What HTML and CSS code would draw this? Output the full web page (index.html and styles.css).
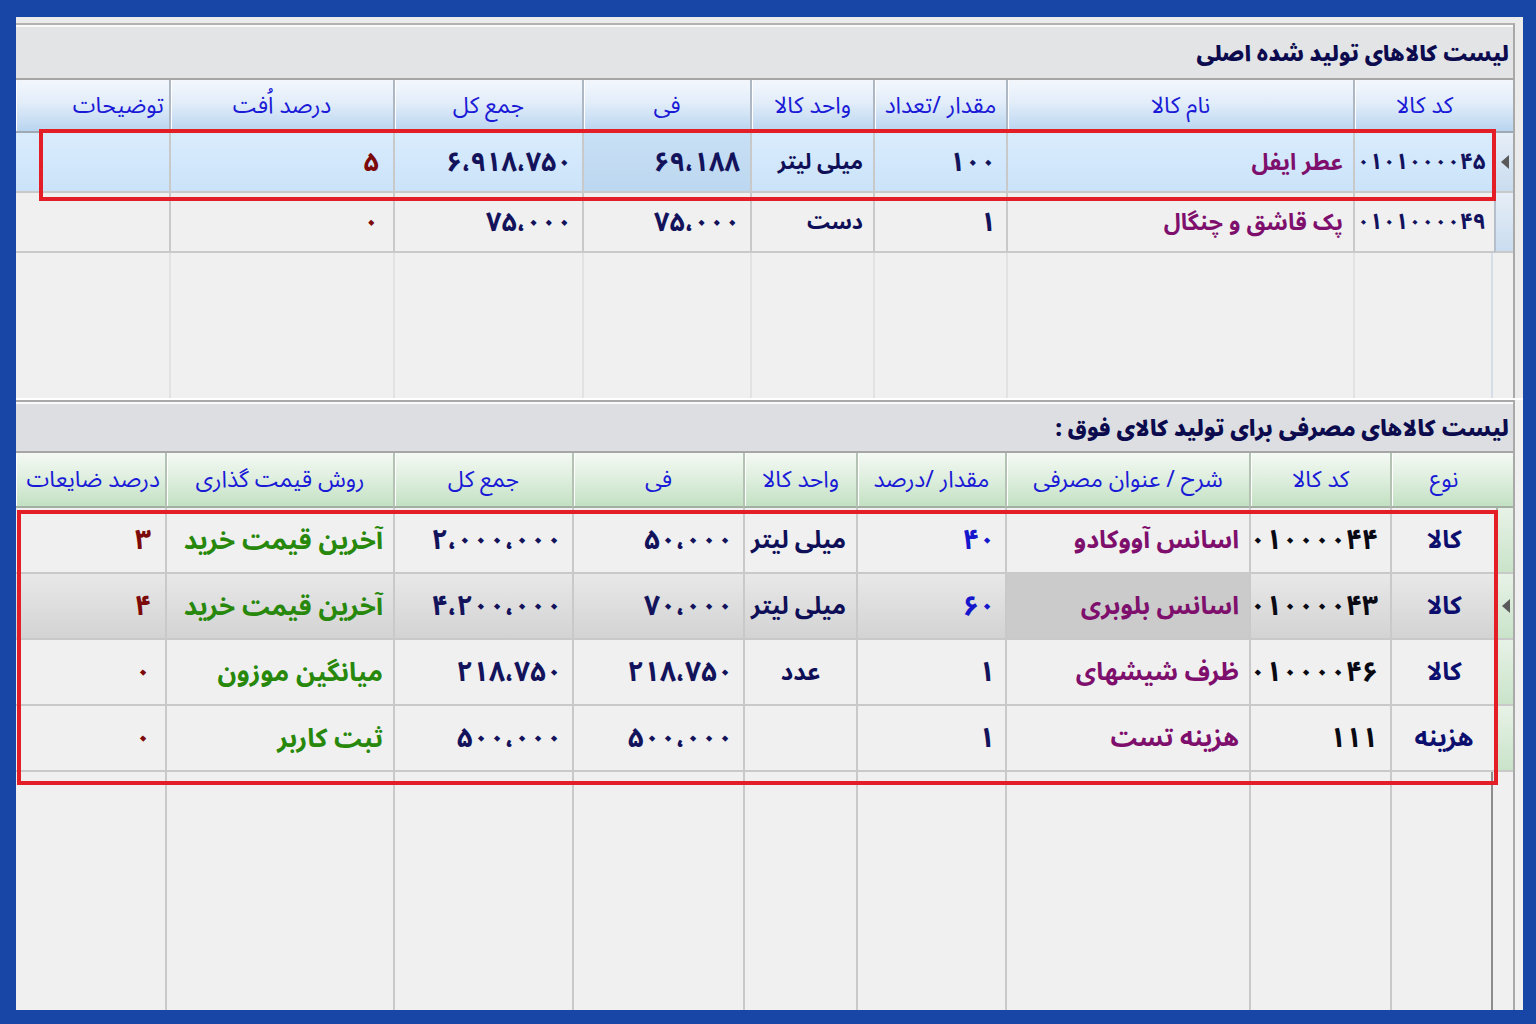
FILE: index.html
```html
<!DOCTYPE html>
<html lang="fa" dir="rtl">
<head>
<meta charset="utf-8">
<title>لیست کالاها</title>
<link rel="stylesheet" href="styles.css">
</head>
<body>
<div class="frame">
  <div class="screen">
    <section class="panel panel-top">
      <div class="box">
        <div class="caption">لیست کالاهای تولید شده اصلی</div>
        <div class="grid grid-top">
          <div class="row head">
            <div class="c ind"></div>
            <div class="c">کد کالا</div>
            <div class="c">نام کالا</div>
            <div class="c">مقدار /تعداد</div>
            <div class="c">واحد کالا</div>
            <div class="c">فی</div>
            <div class="c">جمع کل</div>
            <div class="c">درصد اُفت</div>
            <div class="c right">توضیحات</div>
          </div>
          <div class="row data sel">
            <div class="c ind"><svg width="8" height="14" viewBox="0 0 8 14"><polygon points="8,0 8,14 0,7" fill="#5a5a5a"/></svg></div>
            <div class="c code">۰۱۰۱۰۰۰۰۴۵</div>
            <div class="c name">عطر ایفل</div>
            <div class="c num">۱۰۰</div>
            <div class="c unit">میلی لیتر</div>
            <div class="c num cur">۶۹،۱۸۸</div>
            <div class="c num">۶،۹۱۸،۷۵۰</div>
            <div class="c red">۵</div>
            <div class="c"></div>
          </div>
          <div class="row data">
            <div class="c ind"></div>
            <div class="c code">۰۱۰۱۰۰۰۰۴۹</div>
            <div class="c name">پک قاشق و چنگال</div>
            <div class="c num">۱</div>
            <div class="c unit">دست</div>
            <div class="c num">۷۵،۰۰۰</div>
            <div class="c num">۷۵،۰۰۰</div>
            <div class="c red">۰</div>
            <div class="c"></div>
          </div>
          <div class="row fill">
            <div class="c ind"></div>
            <div class="c"></div><div class="c"></div><div class="c"></div><div class="c"></div>
            <div class="c"></div><div class="c"></div><div class="c"></div><div class="c"></div>
          </div>
        </div>
      </div>
    </section>

    <section class="panel panel-bottom">
      <div class="box">
        <div class="caption">لیست کالاهای مصرفی برای تولید کالای فوق :</div>
        <div class="grid grid-bottom">
          <div class="row head">
            <div class="c ind"></div>
            <div class="c">نوع</div>
            <div class="c">کد کالا</div>
            <div class="c">شرح / عنوان مصرفی</div>
            <div class="c">مقدار /درصد</div>
            <div class="c">واحد کالا</div>
            <div class="c">فی</div>
            <div class="c">جمع کل</div>
            <div class="c">روش قیمت گذاری</div>
            <div class="c right">درصد ضایعات</div>
          </div>
          <div class="row data">
            <div class="c ind"></div>
            <div class="c type">کالا</div>
            <div class="c code2">۰۱۰۰۰۰۴۴</div>
            <div class="c name">اسانس آووکادو</div>
            <div class="c qty">۴۰</div>
            <div class="c unit">میلی لیتر</div>
            <div class="c num">۵۰،۰۰۰</div>
            <div class="c num">۲،۰۰۰،۰۰۰</div>
            <div class="c green">آخرین قیمت خرید</div>
            <div class="c red">۳</div>
          </div>
          <div class="row data sel2">
            <div class="c ind"><svg width="8" height="14" viewBox="0 0 8 14"><polygon points="8,0 8,14 0,7" fill="#5a5a5a"/></svg></div>
            <div class="c type">کالا</div>
            <div class="c code2">۰۱۰۰۰۰۴۳</div>
            <div class="c name cur2">اسانس بلوبری</div>
            <div class="c qty">۶۰</div>
            <div class="c unit">میلی لیتر</div>
            <div class="c num">۷۰،۰۰۰</div>
            <div class="c num">۴،۲۰۰،۰۰۰</div>
            <div class="c green">آخرین قیمت خرید</div>
            <div class="c red">۴</div>
          </div>
          <div class="row data">
            <div class="c ind"></div>
            <div class="c type">کالا</div>
            <div class="c code2">۰۱۰۰۰۰۴۶</div>
            <div class="c name">ظرف شیشهای</div>
            <div class="c num">۱</div>
            <div class="c unit centered">عدد</div>
            <div class="c num">۲۱۸،۷۵۰</div>
            <div class="c num">۲۱۸،۷۵۰</div>
            <div class="c green">میانگین موزون</div>
            <div class="c red">۰</div>
          </div>
          <div class="row data">
            <div class="c ind"></div>
            <div class="c type">هزینه</div>
            <div class="c code2">۱۱۱</div>
            <div class="c name">هزینه تست</div>
            <div class="c num">۱</div>
            <div class="c unit"></div>
            <div class="c num">۵۰۰،۰۰۰</div>
            <div class="c num">۵۰۰،۰۰۰</div>
            <div class="c green">ثبت کاربر</div>
            <div class="c red">۰</div>
          </div>
          <div class="row fill">
            <div class="c ind"></div>
            <div class="c"></div><div class="c"></div><div class="c"></div><div class="c"></div><div class="c"></div>
            <div class="c"></div><div class="c"></div><div class="c"></div><div class="c"></div>
          </div>
        </div>
      </div>
    </section>
  </div>
  <div class="mark mark-top"></div>
  <div class="mark mark-bottom"></div>
</div>
</body>
</html>
```

FILE: styles.css
```css
* { box-sizing: border-box; margin: 0; padding: 0; }
html, body { width: 1536px; height: 1024px; overflow: hidden; }
body {
  background: #1746a6;
  font-family: "Noto Sans Arabic", "DejaVu Sans", sans-serif;
}
.frame {
  position: relative;
  width: 1536px;
  height: 1024px;
  padding: 17px 13px 14px 16px;
}
.screen {
  width: 1507px;
  height: 993px;
  background: #f0f0f0;
  display: flex;
  flex-direction: column;
  direction: rtl;
}

/* panels */
.panel { display: flex; flex-direction: column; }
.panel-top {
  height: 381px;
  padding-top: 6px;
  background: #ebebeb;
}
.panel-bottom {
  flex: 1;
  border-top: 2px solid #ffffff;
}
.box {
  flex: 1;
  display: flex;
  flex-direction: column;
  margin-right: 8px;
  border-right: 2px solid #a9a9a9;
  border-top: 2px solid #b2b2b2;
  background: #f0f0f0;
  min-height: 0;
}
.panel-bottom .box { border-top: 2px solid #a8a8a8; }

.caption {
  height: 55px;
  background: #e3e4e6;
  border-top: 2px solid #fafafa;
  border-bottom: 2px solid #a6a6a6;
  font-weight: 900;
  font-size: 21.5px;
  color: #0b0b4e;
  display: flex;
  align-items: center;
  padding-right: 4px;
  padding-top: 2px;
  white-space: nowrap;
}
.panel-bottom .caption {
  height: 51px;
  background: #dcdee1;
  font-size: 22px;
}

/* grids */
.grid { flex: 1; display: flex; flex-direction: column; min-height: 0; }
.row { display: grid; }
.grid-top .row { grid-template-columns: 19px 141px 347px 133px 123px 168px 189px 224px 1fr; }
.grid-bottom .row { grid-template-columns: 17px 106px 141px 244px 149px 113px 171px 179px 228px 1fr; }

.c {
  display: flex;
  align-items: center;
  justify-content: flex-start;
  padding: 0 10px;
  white-space: nowrap;
  border-left: 2px solid #c9c9c9;
  border-bottom: 2px solid #c9c9c9;
  font-size: 25px;
  min-width: 0;
}
.row .c:last-child { border-left: none; }

/* header */
.head { height: 53px; }
.head .c {
  justify-content: center;
  font-size: 23px;
  color: #1a1ad6;
  border-left: 2px solid #aeb8c4;
  border-bottom: 2px solid #9fa9b4;
  box-shadow: inset 1px 0 0 #ffffff;
}
.head .c.right { justify-content: flex-start; padding: 0 5px; }
.grid-top .head .c { background: linear-gradient(#f3f7fc 0%, #e2edf9 45%, #b9d5f0 100%); }
.grid-bottom .head .c {
  background: linear-gradient(#f4f9f4 0%, #e0efe0 45%, #c3e1c3 100%);
  border-left-color: #b4c2b4;
  border-bottom-color: #a4afa4;
}
.grid-bottom .head { height: 55px; }

/* data rows */
.grid-top .data { height: 60px; }
.grid-bottom .data { height: 66px; }
.data .c { color: #12125e; font-weight: 700; }
.data .ind { padding: 0; justify-content: center; }
.grid-top .data .ind { background: linear-gradient(#e6eef7, #c9dcef); border-left-color: #b4bfcb; }
.grid-bottom .data .ind { background: linear-gradient(#e7f2e7, #c9e3c9); border-left-color: #aab7aa; }

.sel .c { background: linear-gradient(#d9ecfd, #cbe3f9); }
.sel .c.cur { background: linear-gradient(#c8e0f5, #bcd7f0); }
.sel2 .c { background: linear-gradient(#e8e8e8, #d3d3d3); }
.sel2 .c.cur2 { background: #cbcbcb; }

/* per-grid text sizes */
.grid-top .data .c { font-size: 23px; }
.grid-top .data .unit { font-size: 21.5px; }
.grid-top .data .num, .grid-top .data .red { font-size: 27px; }
.grid-top .data .code { font-size: 22.5px; }
.grid-bottom .data .c { font-size: 25px; }
.grid-bottom .data .unit { font-size: 24px; }
.grid-bottom .data .num,
.grid-bottom .data .qty,
.grid-bottom .data .code2,
.grid-bottom .data .red { font-size: 28px; }
.grid-bottom .data .green { font-size: 26px; }

.code {
  direction: ltr;
  justify-content: flex-start;
  overflow: hidden;
  padding: 0 0 0 2px;
  color: #10103e;
}
.code2 { color: #0a0a14 !important; padding-right: 12px; }
.name { color: #7e0f6c !important; }
.unit { color: #0f0f58 !important; }
.unit.centered { justify-content: center; }
.num { color: #13135c !important; }
.qty { color: #1616cc !important; }
.red { color: #7c0a0a !important; padding-right: 14px; }
.green { color: #27880c !important; }
.type { justify-content: center !important; color: #0d0f6e !important; }

/* filler */
.fill { flex: 1; }
.fill .c { border-bottom: none; }
.grid-top .fill .c { border-left-color: #e2e2e2; }
.grid-top .fill .ind { border-left-color: #d6dde6; }
.grid-bottom .fill .ind { border-left: 2px solid #8c8c8c; }

/* red annotation boxes */
.mark {
  position: absolute;
  border: 4px solid #e31e26;
  pointer-events: none;
}
.mark-top { left: 39px; top: 129px; width: 1457px; height: 72px; }
.mark-bottom { left: 17px; top: 510px; width: 1481px; height: 275px; }
```
